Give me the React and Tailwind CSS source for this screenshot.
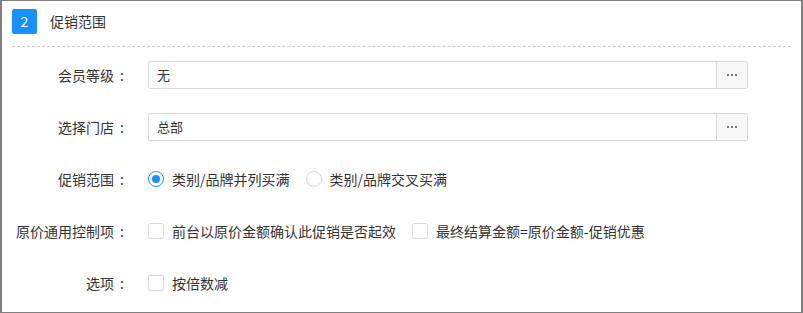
import { useState } from "react";

const font = { fontFamily: '"Noto Sans CJK SC", "Noto Sans", sans-serif' };

function Label({ children }) {
  return (
    <div className="flex w-[128px] shrink-0 justify-end text-[14px] text-[#333]">
      <span>{children}</span>
      <span className="w-[16px] text-center">:</span>
    </div>
  );
}

function PickerInput({ value }) {
  return (
    <div className="flex h-[28px] w-[600px] rounded-[2px] border border-[#d9d9d9]">
      <div className="flex flex-1 items-center pl-[8px] text-[13px] text-[#333]">{value}</div>
      <button className="flex w-[31px] items-center justify-center gap-[2px] border-l border-[#d9d9d9] bg-[#f8f8f8]">
        <span className="h-[2px] w-[2px] bg-[#777]" />
        <span className="h-[2px] w-[2px] bg-[#777]" />
        <span className="h-[2px] w-[2px] bg-[#777]" />
      </button>
    </div>
  );
}

function Radio({ checked, label, onClick }) {
  return (
    <label className="flex cursor-pointer items-center gap-[8px]" onClick={onClick}>
      <span
        className={
          checked
            ? "flex h-[16px] w-[16px] items-center justify-center rounded-full border border-[#1890ff] bg-white"
            : "flex h-[16px] w-[16px] items-center justify-center rounded-full border border-[#d9d9d9] bg-white"
        }
      >
        {checked && <span className="h-[8px] w-[8px] rounded-full bg-[#1890ff]" />}
      </span>
      <span className="text-[14px] text-[#333]">{label}</span>
    </label>
  );
}

function Checkbox({ label }) {
  const [on, setOn] = useState(false);
  return (
    <label className="flex cursor-pointer items-center gap-[8px]" onClick={() => setOn(!on)}>
      <span
        className={
          on
            ? "h-[16px] w-[16px] rounded-[2px] border border-[#1890ff] bg-[#1890ff]"
            : "h-[16px] w-[16px] rounded-[2px] border border-[#d9d9d9] bg-white"
        }
      />
      <span className="text-[14px] text-[#333]">{label}</span>
    </label>
  );
}

export default function App() {
  const [scope, setScope] = useState(0);

  return (
    <div
      className="h-[313px] w-[803px] border-t border-b border-l-2 border-r-2 border-[#808080] bg-white"
      style={font}
    >
      {/* header */}
      <div className="flex h-[45px] items-start gap-[13px] pl-[10px] pt-[8px]">
        <div className="flex h-[25px] w-[25px] items-center justify-center rounded-[2px] bg-[#1890ff] text-[14px] text-white">
          2
        </div>
        <div className="mt-[2px] text-[14px] text-[#333]">促销范围</div>
      </div>
      <div className="mx-[10px] border-t border-dashed border-[#cccccc]" />

      <div className="mt-[14px] flex flex-col gap-[24px]">
        <div className="flex h-[28px] items-center gap-[18px]">
          <Label>会员等级</Label>
          <PickerInput value="无" />
        </div>

        <div className="flex h-[28px] items-center gap-[18px]">
          <Label>选择门店</Label>
          <PickerInput value="总部" />
        </div>

        <div className="flex h-[28px] items-center gap-[18px]">
          <Label>促销范围</Label>
          <div className="flex items-center gap-[16px]">
            <Radio checked={scope === 0} label="类别/品牌并列买满" onClick={() => setScope(0)} />
            <Radio checked={scope === 1} label="类别/品牌交叉买满" onClick={() => setScope(1)} />
          </div>
        </div>

        <div className="flex h-[28px] items-center gap-[18px]">
          <Label>原价通用控制项</Label>
          <div className="flex items-center gap-[16px]">
            <Checkbox label="前台以原价金额确认此促销是否起效" />
            <Checkbox label="最终结算金额=原价金额-促销优惠" />
          </div>
        </div>

        <div className="flex h-[28px] items-center gap-[18px]">
          <Label>选项</Label>
          <Checkbox label="按倍数减" />
        </div>
      </div>
    </div>
  );
}
